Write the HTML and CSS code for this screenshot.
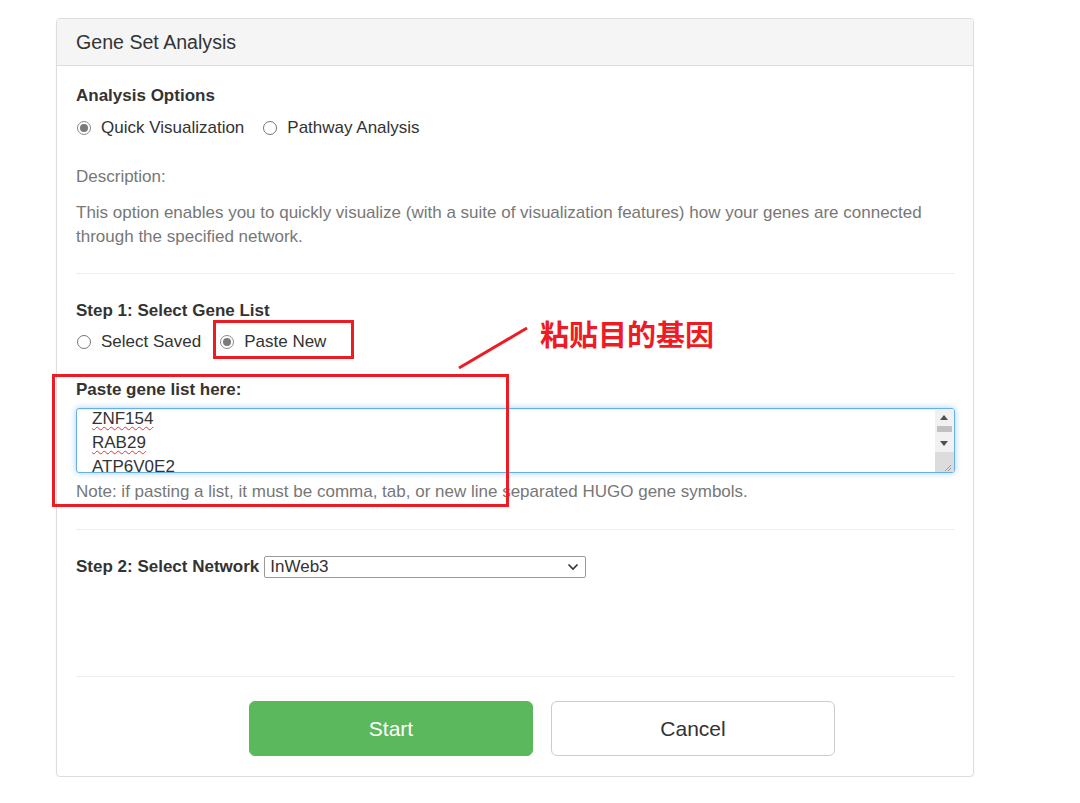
FILE: index.html
```html
<!DOCTYPE html>
<html>
<head>
<meta charset="utf-8">
<link rel="stylesheet" href="styles.css">
</head>
<body>
<div class="panel">
  <div class="panel-heading">Gene Set Analysis</div>
  <div class="panel-body">
    <div class="label-bold">Analysis Options</div>
    <div class="radio-row r1">
      <label class="radio"><span class="dot checked"></span>Quick Visualization</label>
      <label class="radio"><span class="dot"></span>Pathway Analysis</label>
    </div>
    <div class="muted desc-label">Description:</div>
    <p class="muted desc">This option enables you to quickly visualize (with a suite of visualization features) how your genes are connected through the specified network.</p>
    <hr class="sep sep1">
    <div class="label-bold step1">Step 1: Select Gene List</div>
    <div class="radio-row r2">
      <label class="radio"><span class="dot"></span>Select Saved</label>
      <label class="radio"><span class="dot checked"></span>Paste New</label>
    </div>
    <div class="label-bold paste-label">Paste gene list here:</div>
    <div class="textarea">
      <div class="ta-content">
        <div class="gene">ZNF154</div>
        <div class="gene">RAB29</div>
        <div class="gene">ATP6V0E2</div>
      </div>
      <div class="scrollbar">
        <div class="sb-up"></div>
        <div class="sb-thumb"></div>
        <div class="sb-down"></div>
        <div class="sb-resize">
          <svg width="18" height="20" viewBox="0 0 18 20"><path d="M16 13 L10 19 M16 16 L13 19" stroke="#9a9a9a" stroke-width="1"/></svg>
        </div>
      </div>
    </div>
    <div class="muted note">Note: if pasting a list, it must be comma, tab, or new line separated HUGO gene symbols.</div>
    <hr class="sep sep2">
    <div class="step2">
      <span class="label-bold">Step 2: Select Network</span>
      <div class="select">
        <span>InWeb3</span>
        <svg width="12" height="8" viewBox="0 0 12 8"><path d="M1.5 1.5 L6 6 L10.5 1.5" fill="none" stroke="#333" stroke-width="1.6"/></svg>
      </div>
    </div>
    <hr class="sep sep3">
    <div class="buttons">
      <button class="btn btn-start">Start</button>
      <button class="btn btn-cancel">Cancel</button>
    </div>
  </div>
</div>

<div class="annot box1"></div>
<div class="annot box2"></div>
<svg class="annot arrow-line" width="80" height="50" viewBox="0 0 80 50"><line x1="2" y1="45" x2="70" y2="5" stroke="#ed1c24" stroke-width="3"/></svg>
<div class="annot annot-text">粘贴目的基因</div>
</body>
</html>
```

FILE: styles.css
```css
* { box-sizing: border-box; }
body {
  margin: 0;
  background: #fff;
  font-family: "Liberation Sans", Arial, sans-serif;
  font-size: 17px;
  line-height: 24px;
  color: #333;
}
.panel {
  margin: 18px 0 0 56px;
  width: 918px;
  height: 759px;
  border: 1px solid #ddd;
  border-radius: 4px;
  box-shadow: 0 1px 2px rgba(0,0,0,.05);
  overflow: hidden;
}
.panel-heading {
  height: 47px;
  background: #f5f5f5;
  border-bottom: 1px solid #ddd;
  padding: 0 19px;
  font-size: 19.6px;
  line-height: 46px;
  color: #333;
}
.panel-body {
  padding: 18px 18px 0 19px;
}
.label-bold { font-weight: bold; }
.radio-row { display: flex; gap: 18px; margin-top: 8px; }
.r2 { margin-top: 7px; gap: 18px; }
.radio { display: flex; align-items: center; }
.dot {
  width: 14px; height: 14px;
  border: 1px solid #767676;
  border-radius: 50%;
  margin: 0 10px 0 1px;
  position: relative;
}
.dot.checked { border-color: #8a8a8a; }
.dot.checked::after {
  content: "";
  position: absolute;
  left: 2px; top: 2px;
  width: 8px; height: 8px;
  border-radius: 50%;
  background: #7a7a7a;
}
.muted { color: #777; }
.desc-label { margin-top: 25px; }
.desc { margin: 12px 0 0; }
.sep { border: 0; border-top: 1px solid #eee; margin: 0; }
.sep1 { margin-top: 24px; }
.step1 { margin-top: 25px; }
.paste-label { margin-top: 24px; }
.textarea {
  margin-top: 6px;
  height: 65px;
  border: 1px solid #66afe9;
  border-radius: 3px;
  box-shadow: inset 0 1px 1px rgba(0,0,0,.075), 0 0 6px rgba(102,175,233,.6);
  display: flex;
  overflow: hidden;
}
.ta-content {
  flex: 1;
  padding-left: 15px;
  margin-top: -2px;
}
.gene {
  text-decoration: underline wavy #e0393e;
  text-decoration-thickness: 1px;
  text-underline-offset: 2px;
  height: 24px;
}
.scrollbar {
  width: 19px;
  display: flex;
  flex-direction: column;
  background: #f1f1f1;
  padding-top: 2px;
}
.sb-up, .sb-down { height: 13px; position: relative; }
.sb-up::after, .sb-down::after {
  content: ""; position: absolute; left: 5px;
  border-left: 4px solid transparent; border-right: 4px solid transparent;
}
.sb-up::after { top: 4px; border-bottom: 5px solid #505050; }
.sb-down::after { top: 4px; border-top: 5px solid #505050; }
.sb-thumb { height: 7px; margin: 3px 2px 5px; background: #c1c1c1; }
.sb-resize { flex: 1; background: #dcdcdc; margin-top: 3px; }
.sb-resize svg { display: block; }
.note { margin-top: 7px; }
.sep2 { margin-top: 25px; }
.step2 { display: flex; align-items: center; margin-top: 25px; height: 24px; }
.select {
  margin-left: 5px;
  width: 322px; height: 22px;
  border: 1px solid #9a9a9a;
  border-radius: 2px;
  display: flex; align-items: center; justify-content: space-between;
  padding: 0 6px 0 5px;
  font-size: 17px;
}
.sep3 { margin-top: 97px; }
.buttons { display: flex; gap: 18px; margin: 24px 0 0 173px; }
.btn {
  width: 284px; height: 55px;
  border-radius: 6px;
  font-family: "Liberation Sans", Arial, sans-serif;
  font-size: 21px;
}
.btn-start { background: #5cb85c; border: 1px solid #5cb85c; color: #fff; }
.btn-cancel { background: #fff; border: 1px solid #ccc; color: #333; }

.annot { position: absolute; }
.box1 { left: 213px; top: 320px; width: 141px; height: 39px; border: 3px solid #ed1c24; }
.box2 { left: 52px; top: 374px; width: 457px; height: 133px; border: 3px solid #ed1c24; }
.arrow-line { left: 457px; top: 323px; }
.annot-text {
  left: 540px; top: 313px;
  font-family: "Noto Sans CJK SC", sans-serif;
  font-weight: bold;
  font-size: 29px;
  line-height: 40px;
  color: #ed1c24;
}
```
